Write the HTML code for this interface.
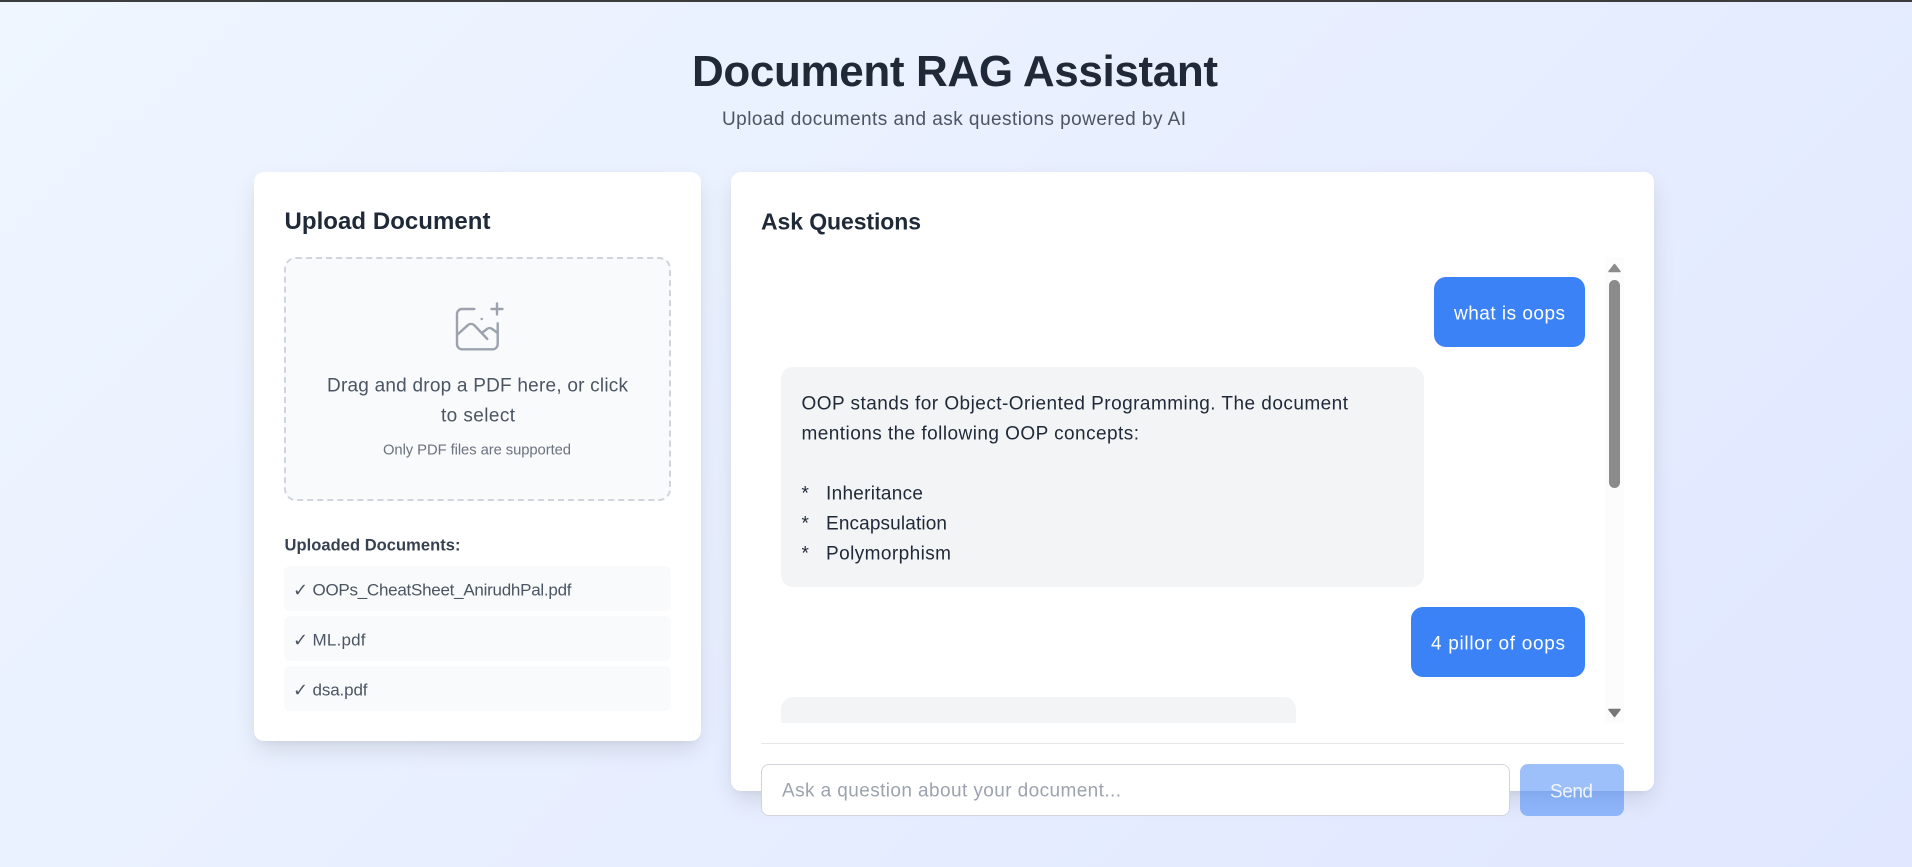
<!DOCTYPE html>
<html lang="en">
<head>
<meta charset="utf-8">
<title>Document RAG Assistant</title>
<style>
html,body{margin:0;padding:0}
body{width:1912px;height:867px;overflow:hidden;position:relative;background:linear-gradient(135deg,#eff6ff 0%,#e0e7ff 100%);font-family:"Liberation Sans",sans-serif}
.b{position:absolute;box-sizing:border-box}
.card{background:#fff;border-radius:10px;box-shadow:0 10px 25px -3px rgba(0,0,0,.12),0 4px 6px -2px rgba(0,0,0,.04)}
.doc{left:284px;width:387px;height:45px;background:#f9fafb;border-radius:6px}
svg{position:absolute;left:0;top:0}
text{font-family:"Liberation Sans",sans-serif}
</style>
</head>
<body>
<div class="b" style="left:0;top:0;width:1912px;height:2px;background:#3c3c3c"></div>

<div class="b card" style="left:254px;top:172px;width:447px;height:569px"></div>
<div class="b" style="left:284px;top:257px;width:387px;height:244px;border:2px dashed #d1d5db;border-radius:12px;background:#f9fafb"></div>
<div class="b doc" style="top:566px"></div>
<div class="b doc" style="top:616px"></div>
<div class="b doc" style="top:666px"></div>

<div class="b card" style="left:731px;top:172px;width:923px;height:619px"></div>
<div class="b" style="left:1605px;top:257px;width:19px;height:466px;background:#fcfcfc"></div>
<div class="b" style="left:1609px;top:280px;width:11px;height:208px;background:#8b8b8b;border-radius:5.5px"></div>
<div class="b" style="left:1434px;top:277px;width:151px;height:70px;background:#3b82f6;border-radius:12px"></div>
<div class="b" style="left:781px;top:367px;width:643px;height:220px;background:#f3f4f6;border-radius:12px"></div>
<div class="b" style="left:1411px;top:607px;width:174px;height:70px;background:#3b82f6;border-radius:12px"></div>
<div class="b" style="left:781px;top:697px;width:515px;height:26px;background:#f3f4f6;border-radius:12px 12px 0 0"></div>
<div class="b" style="left:761px;top:743px;width:863px;height:1px;background:#e5e7eb"></div>
<div class="b" style="left:761px;top:764px;width:749px;height:52px;background:#fff;border:1px solid #d1d5db;border-radius:8px"></div>
<div class="b" style="left:1520px;top:764px;width:104px;height:52px;background:#3b82f6;opacity:.5;border-radius:8px"></div>

<svg width="1912" height="867" viewBox="0 0 1912 867">
  <!-- scrollbar arrows -->
  <path d="M1614.500 264.500l5.500 7h-11z" fill="#8b8b8b" stroke="#8b8b8b" stroke-width="1.500" stroke-linejoin="round"/>
  <path d="M1609 709.500h11l-5.500 7z" fill="#777" stroke="#777" stroke-width="1.500" stroke-linejoin="round"/>
  <!-- upload icon -->
  <g fill="none" stroke="#9ca3af" stroke-width="2.400" stroke-linecap="round" stroke-linejoin="round">
    <path d="M474.300 309H462a5 5 0 0 0-5 5v30.300a5 5 0 0 0 5 5h30.700a5 5 0 0 0 5-5V323.300"/>
    <path d="M457 335l10.800-9.800a5 5 0 0 1 6.300-0.200L487.300 339"/>
    <path d="M481.700 333l5.300-4a4 4 0 0 1 5-0.100l5.700 4.100"/>
    <path d="M497 303.500v11M491.500 309h11"/>
    <path d="M481.600 319h.2"/>
  </g>

  <text x="692" y="86" font-size="44" font-weight="700" fill="#1f2937" textLength="526" lengthAdjust="spacing">Document RAG Assistant</text>
  <text x="722" y="125" font-size="19" fill="#4b5563" textLength="464" lengthAdjust="spacing">Upload documents and ask questions powered by AI</text>

  <text x="284.500" y="229" font-size="24" font-weight="700" fill="#1f2937" textLength="206" lengthAdjust="spacing">Upload Document</text>
  <text x="327" y="391.500" font-size="19" fill="#4b5563" textLength="301" lengthAdjust="spacing">Drag and drop a PDF here, or click</text>
  <text x="441" y="421.500" font-size="19" fill="#4b5563" textLength="74" lengthAdjust="spacing">to select</text>
  <text x="383" y="454.500" font-size="14.800" fill="#6b7280" textLength="188" lengthAdjust="spacing">Only PDF files are supported</text>
  <text x="284.500" y="550.500" font-size="16.500" font-weight="700" fill="#374151" textLength="176" lengthAdjust="spacing">Uploaded Documents:</text>

  <text x="293" y="596" font-size="18" fill="#4b5563" style="font-family:'DejaVu Sans',sans-serif">✓</text>
  <text x="312.500" y="595.500" font-size="17" fill="#4b5563" textLength="259" lengthAdjust="spacing">OOPs_CheatSheet_AnirudhPal.pdf</text>
  <text x="293" y="646" font-size="18" fill="#4b5563" style="font-family:'DejaVu Sans',sans-serif">✓</text>
  <text x="312.500" y="645.500" font-size="17" fill="#4b5563" textLength="53" lengthAdjust="spacing">ML.pdf</text>
  <text x="293" y="696" font-size="18" fill="#4b5563" style="font-family:'DejaVu Sans',sans-serif">✓</text>
  <text x="312.500" y="695.500" font-size="17" fill="#4b5563" textLength="55" lengthAdjust="spacing">dsa.pdf</text>

  <text x="761" y="229.500" font-size="23" font-weight="700" fill="#1f2937" textLength="160" lengthAdjust="spacing">Ask Questions</text>

  <text x="1454" y="319.500" font-size="19" fill="#fff" textLength="111" lengthAdjust="spacing">what is oops</text>
  <text x="801.500" y="409.500" font-size="19" fill="#1f2937" textLength="546.500" lengthAdjust="spacing">OOP stands for Object-Oriented Programming. The document</text>
  <text x="801.500" y="439.500" font-size="19" fill="#1f2937" textLength="337.500" lengthAdjust="spacing">mentions the following OOP concepts:</text>
  <text x="801.500" y="499.500" font-size="19" fill="#1f2937">*</text>
  <text x="826" y="499.500" font-size="19" fill="#1f2937" textLength="97" lengthAdjust="spacing">Inheritance</text>
  <text x="801.500" y="529.500" font-size="19" fill="#1f2937">*</text>
  <text x="826" y="529.500" font-size="19" fill="#1f2937" textLength="121" lengthAdjust="spacing">Encapsulation</text>
  <text x="801.500" y="559.500" font-size="19" fill="#1f2937">*</text>
  <text x="826" y="559.500" font-size="19" fill="#1f2937" textLength="125" lengthAdjust="spacing">Polymorphism</text>
  <text x="1431" y="649.500" font-size="19" fill="#fff" textLength="134" lengthAdjust="spacing">4 pillor of oops</text>

  <text x="782" y="796.500" font-size="19" fill="#9ca3af" textLength="339" lengthAdjust="spacing">Ask a question about your document...</text>
  <text x="1550" y="797.500" font-size="19" fill="#fff" fill-opacity=".85" textLength="43" lengthAdjust="spacing">Send</text>
</svg>
</body>
</html>
